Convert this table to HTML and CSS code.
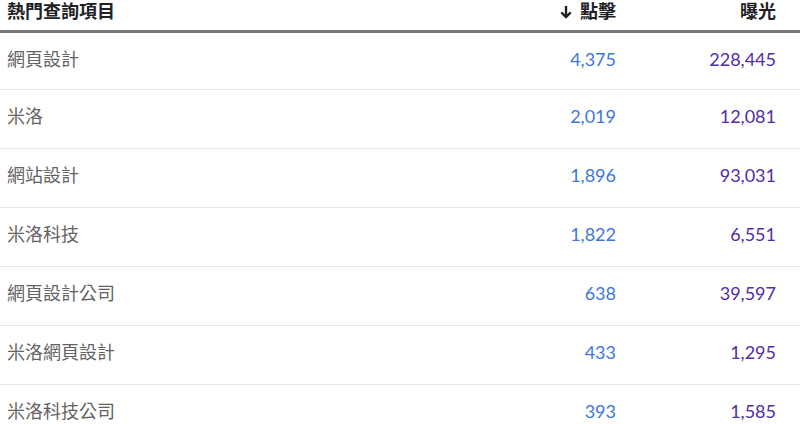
FILE: index.html
```html
<!DOCTYPE html>
<html lang="zh-Hant">
<head>
<meta charset="utf-8">
<link rel="stylesheet" href="styles.css">
</head>
<body>
<div class="table">
  <div class="row head">
    <div class="c q">熱門查詢項目</div>
    <div class="c n"><span class="arrow"><svg width="12" height="14" viewBox="0 0 12 14"><path d="M6 1v11M1.3 7.3L6 12l4.7-4.7" fill="none" stroke="#202124" stroke-width="2.4"/></svg></span>點擊</div>
    <div class="c n">曝光</div>
  </div>
  <div class="row"><div class="c q">網頁設計</div><div class="c n clk">4,375</div><div class="c n imp">228,445</div></div>
  <div class="row"><div class="c q">米洛</div><div class="c n clk">2,019</div><div class="c n imp">12,081</div></div>
  <div class="row"><div class="c q">網站設計</div><div class="c n clk">1,896</div><div class="c n imp">93,031</div></div>
  <div class="row"><div class="c q">米洛科技</div><div class="c n clk">1,822</div><div class="c n imp">6,551</div></div>
  <div class="row"><div class="c q">網頁設計公司</div><div class="c n clk">638</div><div class="c n imp">39,597</div></div>
  <div class="row"><div class="c q">米洛網頁設計</div><div class="c n clk">433</div><div class="c n imp">1,295</div></div>
  <div class="row"><div class="c q">米洛科技公司</div><div class="c n clk">393</div><div class="c n imp">1,585</div></div>
</div>
</body>
</html>
```
FILE: styles.css
```css
html, body { margin: 0; padding: 0; background: #fff; }
body { font-family: Lato, "Noto Sans CJK TC", sans-serif; font-size: 18px; color: #636363; }
.table { width: 800px; }
.row {
  display: grid;
  grid-template-columns: 1fr 160px 160px;
  padding: 15px 24px 0 7px;
  height: 59px;
  box-sizing: border-box;
  align-items: start;
  line-height: 22px;
  border-bottom: 1px solid #e6e6e6;
}
.row.head {
  height: 33px;
  padding-top: 0;
  border-bottom: 3px solid #777;
  color: #202124;
  font-weight: 700;
}
.head + .row { height: 57px; }
.n { text-align: right; }
.clk { color: #3d78d8; }
.imp { color: #512da8; }
.arrow { display: inline-block; margin-right: 8px; vertical-align: -1px; }
```
